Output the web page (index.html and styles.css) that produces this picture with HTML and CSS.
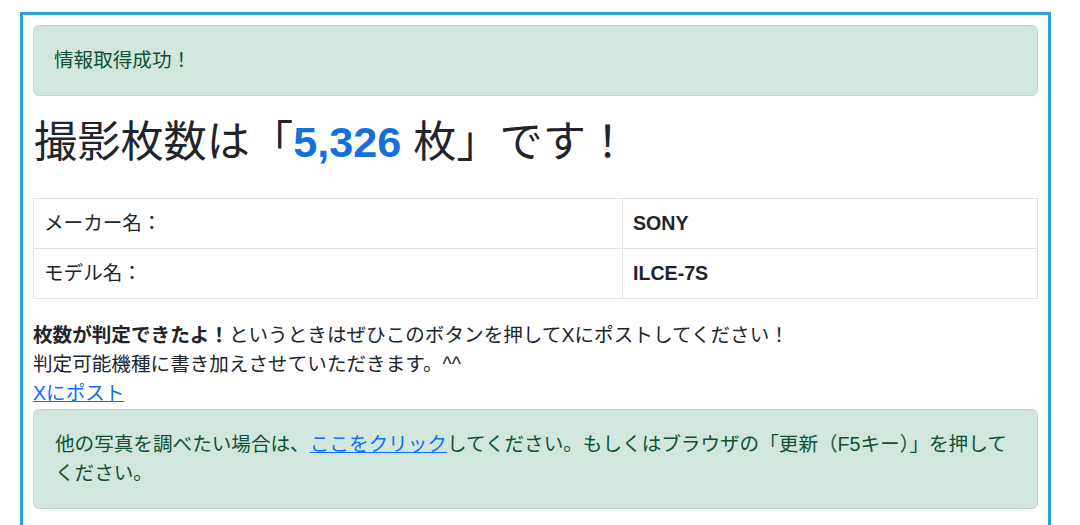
FILE: index.html
```html
<!DOCTYPE html>
<html lang="ja">
<head>
<meta charset="utf-8">
<title>撮影枚数</title>
<link rel="stylesheet" href="styles.css">
</head>
<body>
<div class="frame">
  <div class="alert">情報取得成功！</div>
  <h1 class="title">撮影枚数は「<span class="count">5,326</span> 枚」です！</h1>
  <table class="info">
    <tr><td class="label">メーカー名：</td><td class="value">SONY</td></tr>
    <tr><td class="label">モデル名：</td><td class="value">ILCE-7S</td></tr>
  </table>
  <p class="note"><strong>枚数が判定できたよ！</strong>というときはぜひこのボタンを押してXにポストしてください！<br>判定可能機種に書き加えさせていただきます。^^<br><a class="link" href="#">Xにポスト</a></p>
  <div class="alert alert-next">他の写真を調べたい場合は、<a class="link" href="#">ここをクリック</a>してください。もしくはブラウザの「更新（F5キー）」を押して<br>ください。</div>
</div>
</body>
</html>
```

FILE: styles.css
```css
* { box-sizing: border-box; }

html, body {
  margin: 0;
  padding: 0;
  background: #ffffff;
}

body {
  font-family: "Liberation Sans", "Noto Sans CJK JP", sans-serif;
  font-size: 19.6px;
  line-height: 29px;
  color: #212529;
}

.frame {
  margin: 12px 29px 0 20px;
  border: 3px solid #2ea3db;
  border-bottom: none;
  padding: 10px 10px 40px 10px;
  min-height: 520px;
}

.alert {
  background: #d1e7dd;
  border: 1px solid #badbcc;
  border-radius: 6px;
  color: #0f5132;
  padding: 20px 20px;
}

.alert-next {
  padding: 20px 20px 20px 21px;
}

.title {
  margin: 21px 0 30px 1px;
  font-size: 43.2px;
  line-height: 51px;
  font-weight: 400;
  color: #212529;
}

.count {
  color: #1570dc;
  font-weight: 700;
}

.info {
  width: 100%;
  border-collapse: collapse;
  margin: 0 0 22px 0;
}

.info td {
  border: 1px solid #dee2e6;
  padding: 10px 10px;
  vertical-align: top;
}

.info .label {
  width: 589px;
}

.info .value {
  font-weight: 700;
}

.note {
  margin: 0 0 1px 0;
}

.note strong {
  font-weight: 700;
}

.link {
  color: #0d6efd;
  text-decoration: underline;
}
```
